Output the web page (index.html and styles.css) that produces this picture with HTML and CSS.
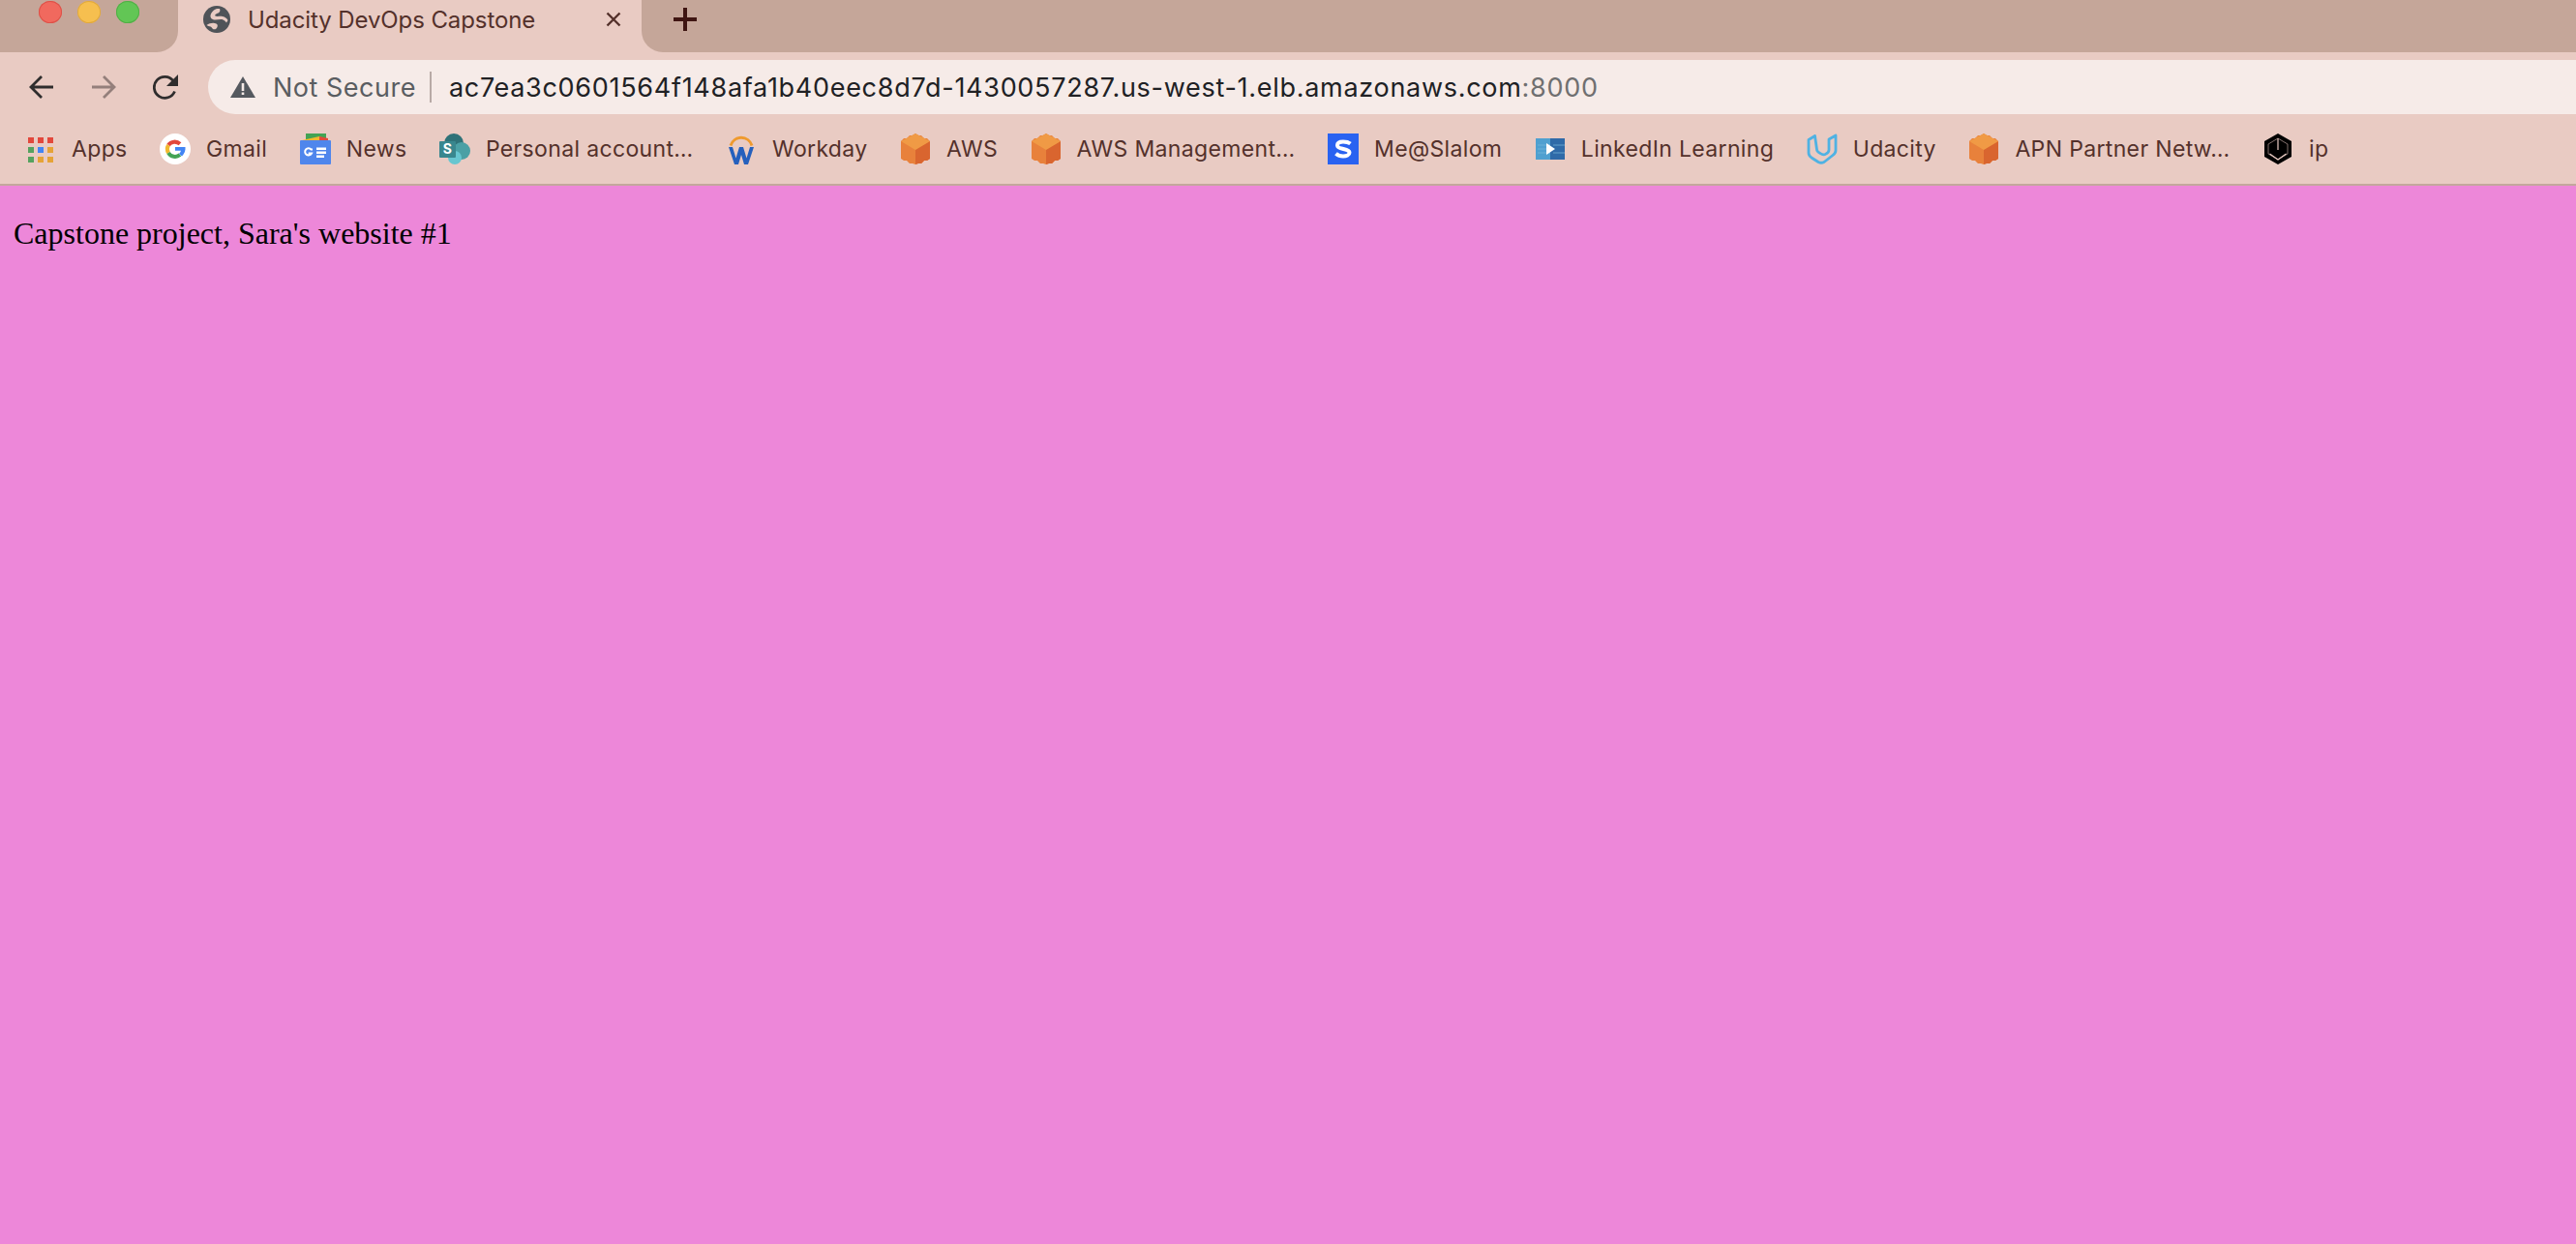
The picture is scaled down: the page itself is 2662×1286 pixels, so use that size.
FILE: index.html
```html
<!DOCTYPE html>
<html lang="en">
<head>
<meta charset="utf-8">
<title>Udacity DevOps Capstone</title>
<link rel="stylesheet" href="styles.css">
</head>
<body>
<svg class="defs" width="0" height="0" aria-hidden="true">
  <symbol id="cube" viewBox="0 0 30 32">
    <path d="M15 0l3 2h3l3 3h3l3 3v18l-3 2h-3l-3 3h-3l-3 1-3-1H9l-3-3H3l-3-2V8l3-3h3l3-3h3z" fill="#e8813b"/>
    <path d="M15 16l15-8v18l-3 2h-3l-3 3h-3l-3 1z" fill="#d9652f"/>
    <path d="M15 0l15 8-15 9L0 8z" fill="#f09a45"/>
  </symbol>
</svg>
<header class="browser">
  <div class="tabstrip">
    <div class="strip-left">
      <span class="light red"></span><span class="light yellow"></span><span class="light green"></span>
    </div>
    <div class="tab">
      <svg class="globe" viewBox="0 0 28 28"><circle cx="14" cy="14" r="14" fill="#4f5358"/><path d="M14 3c-3 1-6 4-6.500 7-.3 3 2 4.500 5 4.500 3 0 6-1 8 0 1.500 .7 2.500 1.500 3.500 3l1.500-2.500c-1-2-3-3.500-5.500-4-3-.5-6 .5-7.500-.5-1-1 1-2.500 3-3 1.500-.5 2.500-2.500 1.500-4.500zM3.500 20c3-2 7-3 10-1.500 2 1 1.500 3.500 0 5-1 1-2.500 1-3.500 .5-1-.8-1-2-2.500-2.500-1.200-.5-3-.5-4-1.500z" fill="#e9cbc3"/></svg>
      <span class="tab-title">Udacity DevOps Capstone</span>
      <svg class="close" viewBox="0 0 16 16"><path d="M1.500 1.500l13 13M14.500 1.500l-13 13" stroke="#54312b" stroke-width="2.400" fill="none"/></svg>
    </div>
    <div class="strip-right">
      <svg class="plus" viewBox="0 0 24 24"><path d="M12 0v24M0 12h24" stroke="#3f1512" stroke-width="4"/></svg>
    </div>
  </div>
  <div class="toolbar">
    <svg class="nav back" viewBox="0 0 26 26"><path d="M25 13H3M13 2L2 13l11 11" stroke="#2f2d2d" stroke-width="2.800" fill="none"/></svg>
    <svg class="nav forward" viewBox="0 0 26 26"><path d="M1 13h22M13 2l11 11-11 11" stroke="#947f7b" stroke-width="2.800" fill="none"/></svg>
    <svg class="nav reload" viewBox="0 0 26 26"><path d="M22.500 17.500a11 11 0 1 1-1.500-11" stroke="#2f2d2d" stroke-width="2.800" fill="none"/><path d="M26 0v12H14z" fill="#2f2d2d"/></svg>
    <div class="omnibox">
      <svg class="warn" viewBox="0 0 26 22"><path d="M13 0l13 22H0z" fill="#55595f"/><path d="M11.700 7h2.600v8h-2.600zM11.700 16.500h2.600v2.600h-2.600z" fill="#f6ebe8"/></svg>
      <span class="not-secure">Not Secure</span>
      <span class="sep"></span>
      <span class="url">ac7ea3c0601564f148afa1b40eec8d7d-1430057287.us-west-1.elb.amazonaws.com<span class="port">:8000</span></span>
    </div>
  </div>
  <nav class="bookmarks">
    <a class="bm">
      <svg class="ico" viewBox="0 0 32 32">
        <g fill="#e2483c"><rect x="3" y="4" width="6" height="6"/><rect x="13" y="4" width="6" height="6"/><rect x="23" y="4" width="6" height="6"/></g>
        <rect x="3" y="14" width="6" height="6" fill="#55a25f"/><rect x="13" y="14" width="6" height="6" fill="#4285f4"/><rect x="23" y="14" width="6" height="6" fill="#e6a336"/>
        <rect x="3" y="24" width="6" height="6" fill="#55a25f"/><rect x="13" y="24" width="6" height="6" fill="#e6a336"/><rect x="23" y="24" width="6" height="6" fill="#e6a336"/>
      </svg>
      <span>Apps</span>
    </a>
    <a class="bm">
      <svg class="ico" viewBox="0 0 32 32">
        <circle cx="16" cy="16" r="16" fill="#fff"/>
        <path d="M21 10.800A8 8 0 0 0 9 12" stroke="#e2483c" stroke-width="4" fill="none"/>
        <path d="M9 12a8 8 0 0 0 0 8" stroke="#f2b92f" stroke-width="4" fill="none"/>
        <path d="M9 20a8 8 0 0 0 12 2" stroke="#43a354" stroke-width="4" fill="none"/>
        <path d="M16 14h10.500c.4 3.500-.7 6.500-3.500 9.500l-3-2.500c1-.8 1.700-1.900 2-3.200H16z" fill="#4285f4"/>
      </svg>
      <span>Gmail</span>
    </a>
    <a class="bm">
      <svg class="ico" viewBox="0 0 32 32">
        <path d="M6 3V0h21v7H6z" fill="#43a354"/>
        <path d="M2 7l18-4 9 4z" fill="#f2b92f"/>
        <path d="M20 3l9 2v3h-9z" fill="#e2483c"/>
        <rect y="7" width="32" height="25" rx="1" fill="#4f86ec"/>
        <path d="M13 16.500h-1.500a3.600 3.600 0 1 0 .5 4h-3.300" stroke="#fff" stroke-width="2" fill="none"/>
        <path d="M17 14.500h10v2.500H17zM17 18.500h10V21H17zM17 22.500h8V25h-8z" fill="#fff"/>
      </svg>
      <span>News</span>
    </a>
    <a class="bm">
      <svg class="ico" viewBox="0 0 32 32">
        <circle cx="15" cy="10" r="10" fill="#2f7278"/>
        <circle cx="23" cy="18" r="9" fill="#4ba0a5"/>
        <circle cx="16" cy="25" r="7" fill="#67c6d0"/>
        <rect y="8" width="17" height="17" rx="1" fill="#39878e"/>
        <text x="8.500" y="21" class="sp-s">S</text>
      </svg>
      <span>Personal account…</span>
    </a>
    <a class="bm">
      <svg class="ico" viewBox="0 0 32 32">
        <path d="M5 12.500a11.500 11.500 0 0 1 22 0" stroke="#ef9a2e" stroke-width="3" fill="none"/>
        <path d="M3 14l6 18h4l3-10 3 10h4l6-18h-4l-3.500 11.500L18 14h-4l-3.500 11.500L7 14z" fill="#2560bd"/>
      </svg>
      <span>Workday</span>
    </a>
    <a class="bm"><svg class="ico"><use href="#cube"/></svg><span>AWS</span></a>
    <a class="bm"><svg class="ico"><use href="#cube"/></svg><span>AWS Management…</span></a>
    <a class="bm">
      <svg class="ico" viewBox="0 0 32 32">
        <rect width="32" height="32" fill="#2962f1"/>
        <path d="M23.500 10.500C21.500 9 19 8.500 16 8.500c-3.500 0-6 1.300-6 3.700 0 5 12.500 2.600 12.500 7.600 0 2.400-3 3.700-6.500 3.700-3 0-5.500-1-7.500-2.800" stroke="#fff" stroke-width="4" fill="none"/>
      </svg>
      <span>Me@Slalom</span>
    </a>
    <a class="bm">
      <svg class="ico" viewBox="0 0 32 32">
        <rect x="1" y="5" width="30" height="22" fill="#4fa0d0"/>
        <rect x="16" y="5" width="15" height="22" fill="#2f6aa8"/>
        <path d="M3 12h13M3 16h13M3 20h13M19 12h12M19 20h12" stroke="#7ab9dc" stroke-width="1" opacity=".7"/>
        <path d="M12 10l9 6-9 6z" fill="#fff"/>
      </svg>
      <span>LinkedIn Learning</span>
    </a>
    <a class="bm">
      <svg class="ico" viewBox="0 0 32 32">
        <path d="M8.500 2.500L2 6.500V20c0 2 1 3.500 3 5l7 4.500c2 1 4 1 6 0l9-7c2-1.500 3-3 3-5V2l-7 4v11c0 2-1 3-3 4-2 1.500-4 1-6-.5-2-1-3.500-2.500-3.500-4z" stroke="#4fb2e3" stroke-width="2.800" fill="none" stroke-linejoin="round"/>
      </svg>
      <span>Udacity</span>
    </a>
    <a class="bm"><svg class="ico"><use href="#cube"/></svg><span>APN Partner Netw…</span></a>
    <a class="bm">
      <svg class="ico" viewBox="0 0 32 32">
        <path d="M16 0l14 8v16l-14 8-14-8V8z" fill="#000"/>
        <path d="M16 5l10 6v10l-10 6-10-6V11z" stroke="#e9cbc3" stroke-width="1" fill="none" opacity=".55"/>
        <path d="M16 5v12M7.500 21l8.500 6 8.500-6" stroke="#e9cbc3" stroke-width="1.200" fill="none"/>
      </svg>
      <span>ip</span>
    </a>
  </nav>
  <div class="rule"></div>
</header>
<main class="page">
  <p class="message">Capstone project, Sara's website #1</p>
</main>
</body>
</html>
```
FILE: styles.css
```css
* { box-sizing: border-box; }
html, body { margin: 0; height: 100%; }
body {
  display: flex;
  flex-direction: column;
  width: 2662px;
  height: 1286px;
  overflow: hidden;
  background: #ed87d9;
  font-family: Inter, "Liberation Sans", sans-serif;
}
.defs { position: absolute; }
.browser { background: #e9cbc3; flex: none; }

.tabstrip { display: flex; height: 54px; }
.strip-left {
  width: 184px;
  background: #c5a699;
  border-bottom-right-radius: 22px;
  display: flex;
  gap: 16px;
  padding: 1px 0 0 40px;
}
.light { width: 24px; height: 23px; border-radius: 50%; }
.red { background: #f1695e; box-shadow: inset 0 0 0 1px #dc5148; }
.yellow { background: #f6bf4f; box-shadow: inset 0 0 0 1px #e0a83d; }
.green { background: #62c655; box-shadow: inset 0 0 0 1px #52ae46; }
.tab {
  width: 479px;
  display: flex;
  align-items: center;
  padding: 0 21px 14px 26px;
  color: #54312b;
  font-size: 24px;
}
.globe { width: 28px; height: 28px; flex: none; }
.tab-title { margin-left: 18px; letter-spacing: -0.1px; white-space: nowrap; flex: 1; }
.close { width: 16px; height: 16px; flex: none; }
.strip-right {
  flex: 1;
  background: #c5a699;
  border-bottom-left-radius: 22px;
  display: flex;
  align-items: center;
  padding: 0 0 14px 33px;
}
.plus { width: 24px; height: 24px; }

.toolbar {
  height: 64px;
  padding: 8px 0 0 30px;
  display: flex;
  align-items: flex-start;
}
.nav { width: 26px; height: 26px; flex: none; margin-top: 15px; }
.forward { margin-left: 38px; }
.reload { margin-left: 38px; }
.omnibox {
  margin-left: 31px;
  flex: 1;
  height: 56px;
  background: #f6ebe8;
  border-radius: 28px 0 0 28px;
  display: flex;
  align-items: center;
  padding-left: 23px;
  font-size: 27px;
  white-space: nowrap;
}
.warn { width: 26px; height: 22px; flex: none; }
.not-secure { margin-left: 18px; color: #5a5d61; letter-spacing: 0.5px; }
.sep { width: 2px; height: 32px; background: #b8aaa6; margin: 0 18px 0 14px; }
.url { color: #202124; letter-spacing: 0.71px; }
.port { color: #6f6f70; }

.bookmarks {
  height: 72px;
  padding: 0 0 0 26px;
  display: flex;
  align-items: center;
  gap: 33.5px;
  color: #54312b;
  font-size: 23px;
  letter-spacing: 0.35px;
}
.bm { display: flex; align-items: center; gap: 16px; white-space: nowrap; }
.ico { width: 32px; height: 32px; flex: none; }
.sp-s { fill: #fff; font: bold 14px Inter, sans-serif; text-anchor: middle; }
.rule { height: 2px; background: #c3a79c; }

.page { flex: 1; padding: 0 14px; color: #000; }
.message {
  margin: 31px 0 0;
  font: 32px/37px "Liberation Serif", serif;
}
```
